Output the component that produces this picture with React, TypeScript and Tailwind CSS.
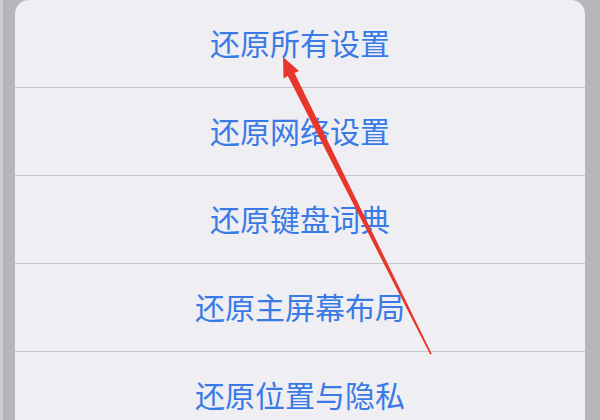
import React from "react";

const items = [
  "还原所有设置",
  "还原网络设置",
  "还原键盘词典",
  "还原主屏幕布局",
  "还原位置与隐私",
];

export default function App() {
  return (
    <div className="relative w-[600px] h-[420px] overflow-hidden bg-[#b6b6ba] flex">
      {/* edge strips */}
      <div className="w-[3px] shrink-0 bg-[#cdcdd1]" />
      <div className="w-[12px] shrink-0" />

      {/* sheet */}
      <div className="flex-1 mr-[15px] bg-[#efeff3] rounded-t-[14px] flex flex-col">
        {items.map((label, i) => (
          <div key={label} className="flex flex-col shrink-0">
            {i > 0 && <div className="h-px bg-[#c8c8cc]" />}
            <div
              className="h-[87px] pb-[3px] flex items-center justify-center text-[30px] leading-none text-[#3a7ae6]"
              style={{ fontFamily: '"Noto Sans CJK SC", "Noto Sans", sans-serif' }}
            >
              {label}
            </div>
          </div>
        ))}
      </div>

      {/* red annotation arrow */}
      <svg
        className="absolute inset-0 pointer-events-none"
        width="600"
        height="420"
        viewBox="0 0 600 420"
      >
        <polygon
          points="283,57 299,71 294.5,73 431.8,354 430.2,354.4 287.8,76 283.5,78.5"
          fill="#e8362c"
        />
      </svg>
    </div>
  );
}
